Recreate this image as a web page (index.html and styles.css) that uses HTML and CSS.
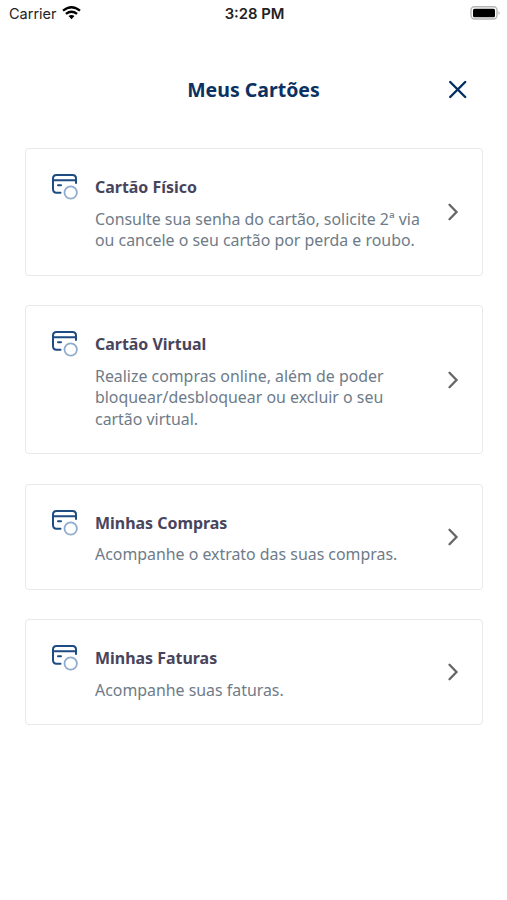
FILE: index.html
```html
<!DOCTYPE html>
<html lang="pt-BR">
<head>
  <meta charset="UTF-8">
  <title>Meus Cartões</title>
  <link rel="stylesheet" href="styles.css">
</head>
<body>
  <svg class="symbols">
    <symbol id="card" viewBox="0 0 28 28">
      <g fill="none" stroke-width="2" stroke-linecap="round">
        <path stroke="#1d4b82" d="M9.500 18.700H5.500Q2 18.700 2 15V4.500Q2 1 5.500 1H21.500Q25 1 25 4.500V9M2 6.300H25M7 11.300H10"/>
        <circle stroke="#8fabce" stroke-width="1.800" cx="19.700" cy="18.500" r="6.200"/>
      </g>
    </symbol>
    <symbol id="arrow" viewBox="0 0 12 18">
      <path fill="none" stroke="#666" stroke-width="2.300" stroke-linecap="round" d="M2.500 1.800L9.500 9L2.500 16.200"/>
    </symbol>
  </svg>
  <div class="statusbar">
    <div class="carrier">Carrier
      <svg width="19" height="14" viewBox="0 0 19 14">
        <g fill="none" stroke="#000" stroke-width="2.300">
          <path d="M1 4.700Q9.500 -2.300 18 4.700M3.900 7.900Q9.500 3.500 15.100 7.900"/>
        </g>
        <path d="M6.500 10Q9.500 7.800 12.500 10L9.500 13.200Z"/>
      </svg>
    </div>
    <div class="time">3:28 PM</div>
    <svg class="battery" width="30" height="14" viewBox="0 0 30 14">
      <rect x="1" y=".8" width="26" height="12.200" rx="3.500" fill="none" stroke="#b5b5b5" stroke-width="1.400"/>
      <rect x="3" y="2.700" width="22" height="8.500" rx="1.500"/>
      <path d="M28.500 5Q31 6.900 28.500 8.800Z" fill="#b5b5b5"/>
    </svg>
  </div>
  <header>
    <h1>Meus Cartões</h1>
    <svg class="close" width="20" height="20" viewBox="0 0 20 20">
      <path d="M2.200 2L17.200 17M17.200 2L2.200 17" stroke="#002e60" stroke-width="2.400" stroke-linecap="round"/>
    </svg>
  </header>
  <main>
    <div class="card">
      <svg class="icon"><use href="#card"/></svg>
      <div class="text">
        <h2>Cartão Físico</h2>
        <p>Consulte sua senha do cartão, solicite 2ª via<br>ou cancele o seu cartão por perda e roubo.</p>
      </div>
      <svg class="arrow"><use href="#arrow"/></svg>
    </div>
    <div class="card">
      <svg class="icon"><use href="#card"/></svg>
      <div class="text">
        <h2>Cartão Virtual</h2>
        <p>Realize compras online, além de poder<br>bloquear/desbloquear ou excluir o seu<br>cartão virtual.</p>
      </div>
      <svg class="arrow"><use href="#arrow"/></svg>
    </div>
    <div class="card">
      <svg class="icon"><use href="#card"/></svg>
      <div class="text">
        <h2>Minhas Compras</h2>
        <p>Acompanhe o extrato das suas compras.</p>
      </div>
      <svg class="arrow"><use href="#arrow"/></svg>
    </div>
    <div class="card">
      <svg class="icon"><use href="#card"/></svg>
      <div class="text">
        <h2>Minhas Faturas</h2>
        <p>Acompanhe suas faturas.</p>
      </div>
      <svg class="arrow"><use href="#arrow"/></svg>
    </div>
  </main>
</body>
</html>
```
FILE: styles.css
```css
* {
  box-sizing: border-box;
}
body {
  margin: 0;
  height: 900px;
  background: #fff;
  font-family: "Noto Sans", sans-serif;
}
h1, h2, p {
  margin: 0;
}
.symbols {
  display: none;
}
.statusbar {
  display: grid;
  grid-template-columns: 1fr auto 1fr;
  align-items: center;
  height: 28px;
  padding: 0 7px 0 9px;
  font: 14.5px/28px Inter, sans-serif;
  color: #222;
}
.carrier {
  display: flex;
  align-items: center;
  gap: 5px;
}
.carrier svg {
  margin-top: -2px;
}
.time {
  font-weight: 600;
  font-size: 14.8px;
}
.battery {
  justify-self: end;
  margin-top: -2px;
}
header {
  display: grid;
  grid-template-columns: 1fr auto 1fr;
  align-items: center;
  height: 60px;
  margin-top: 32px;
  padding: 0 39px;
}
h1 {
  grid-column: 2;
  font-size: 19.5px;
  line-height: 28px;
  color: #0a3161;
}
.close {
  justify-self: end;
}
main {
  display: flex;
  flex-direction: column;
  gap: 29.5px;
  margin: 28px 24.5px 0 25px;
}
.card {
  display: flex;
  align-items: center;
  padding: 25px 23px 22.8px 25px;
  border: 1px solid #e8e9eb;
  border-radius: 4px;
}
.icon {
  align-self: flex-start;
  width: 28px;
  height: 28px;
  margin-right: 16px;
}
.text {
  flex: 1;
}
h2 {
  margin-bottom: 8.8px;
  font-size: 15.95px;
  line-height: 26px;
  color: #48445c;
}
p {
  font-size: 15.9px;
  line-height: 21.5px;
  color: #6e7b88;
  white-space: nowrap;
}
.arrow {
  width: 12px;
  height: 18px;
  margin-top: -2px;
}
```
